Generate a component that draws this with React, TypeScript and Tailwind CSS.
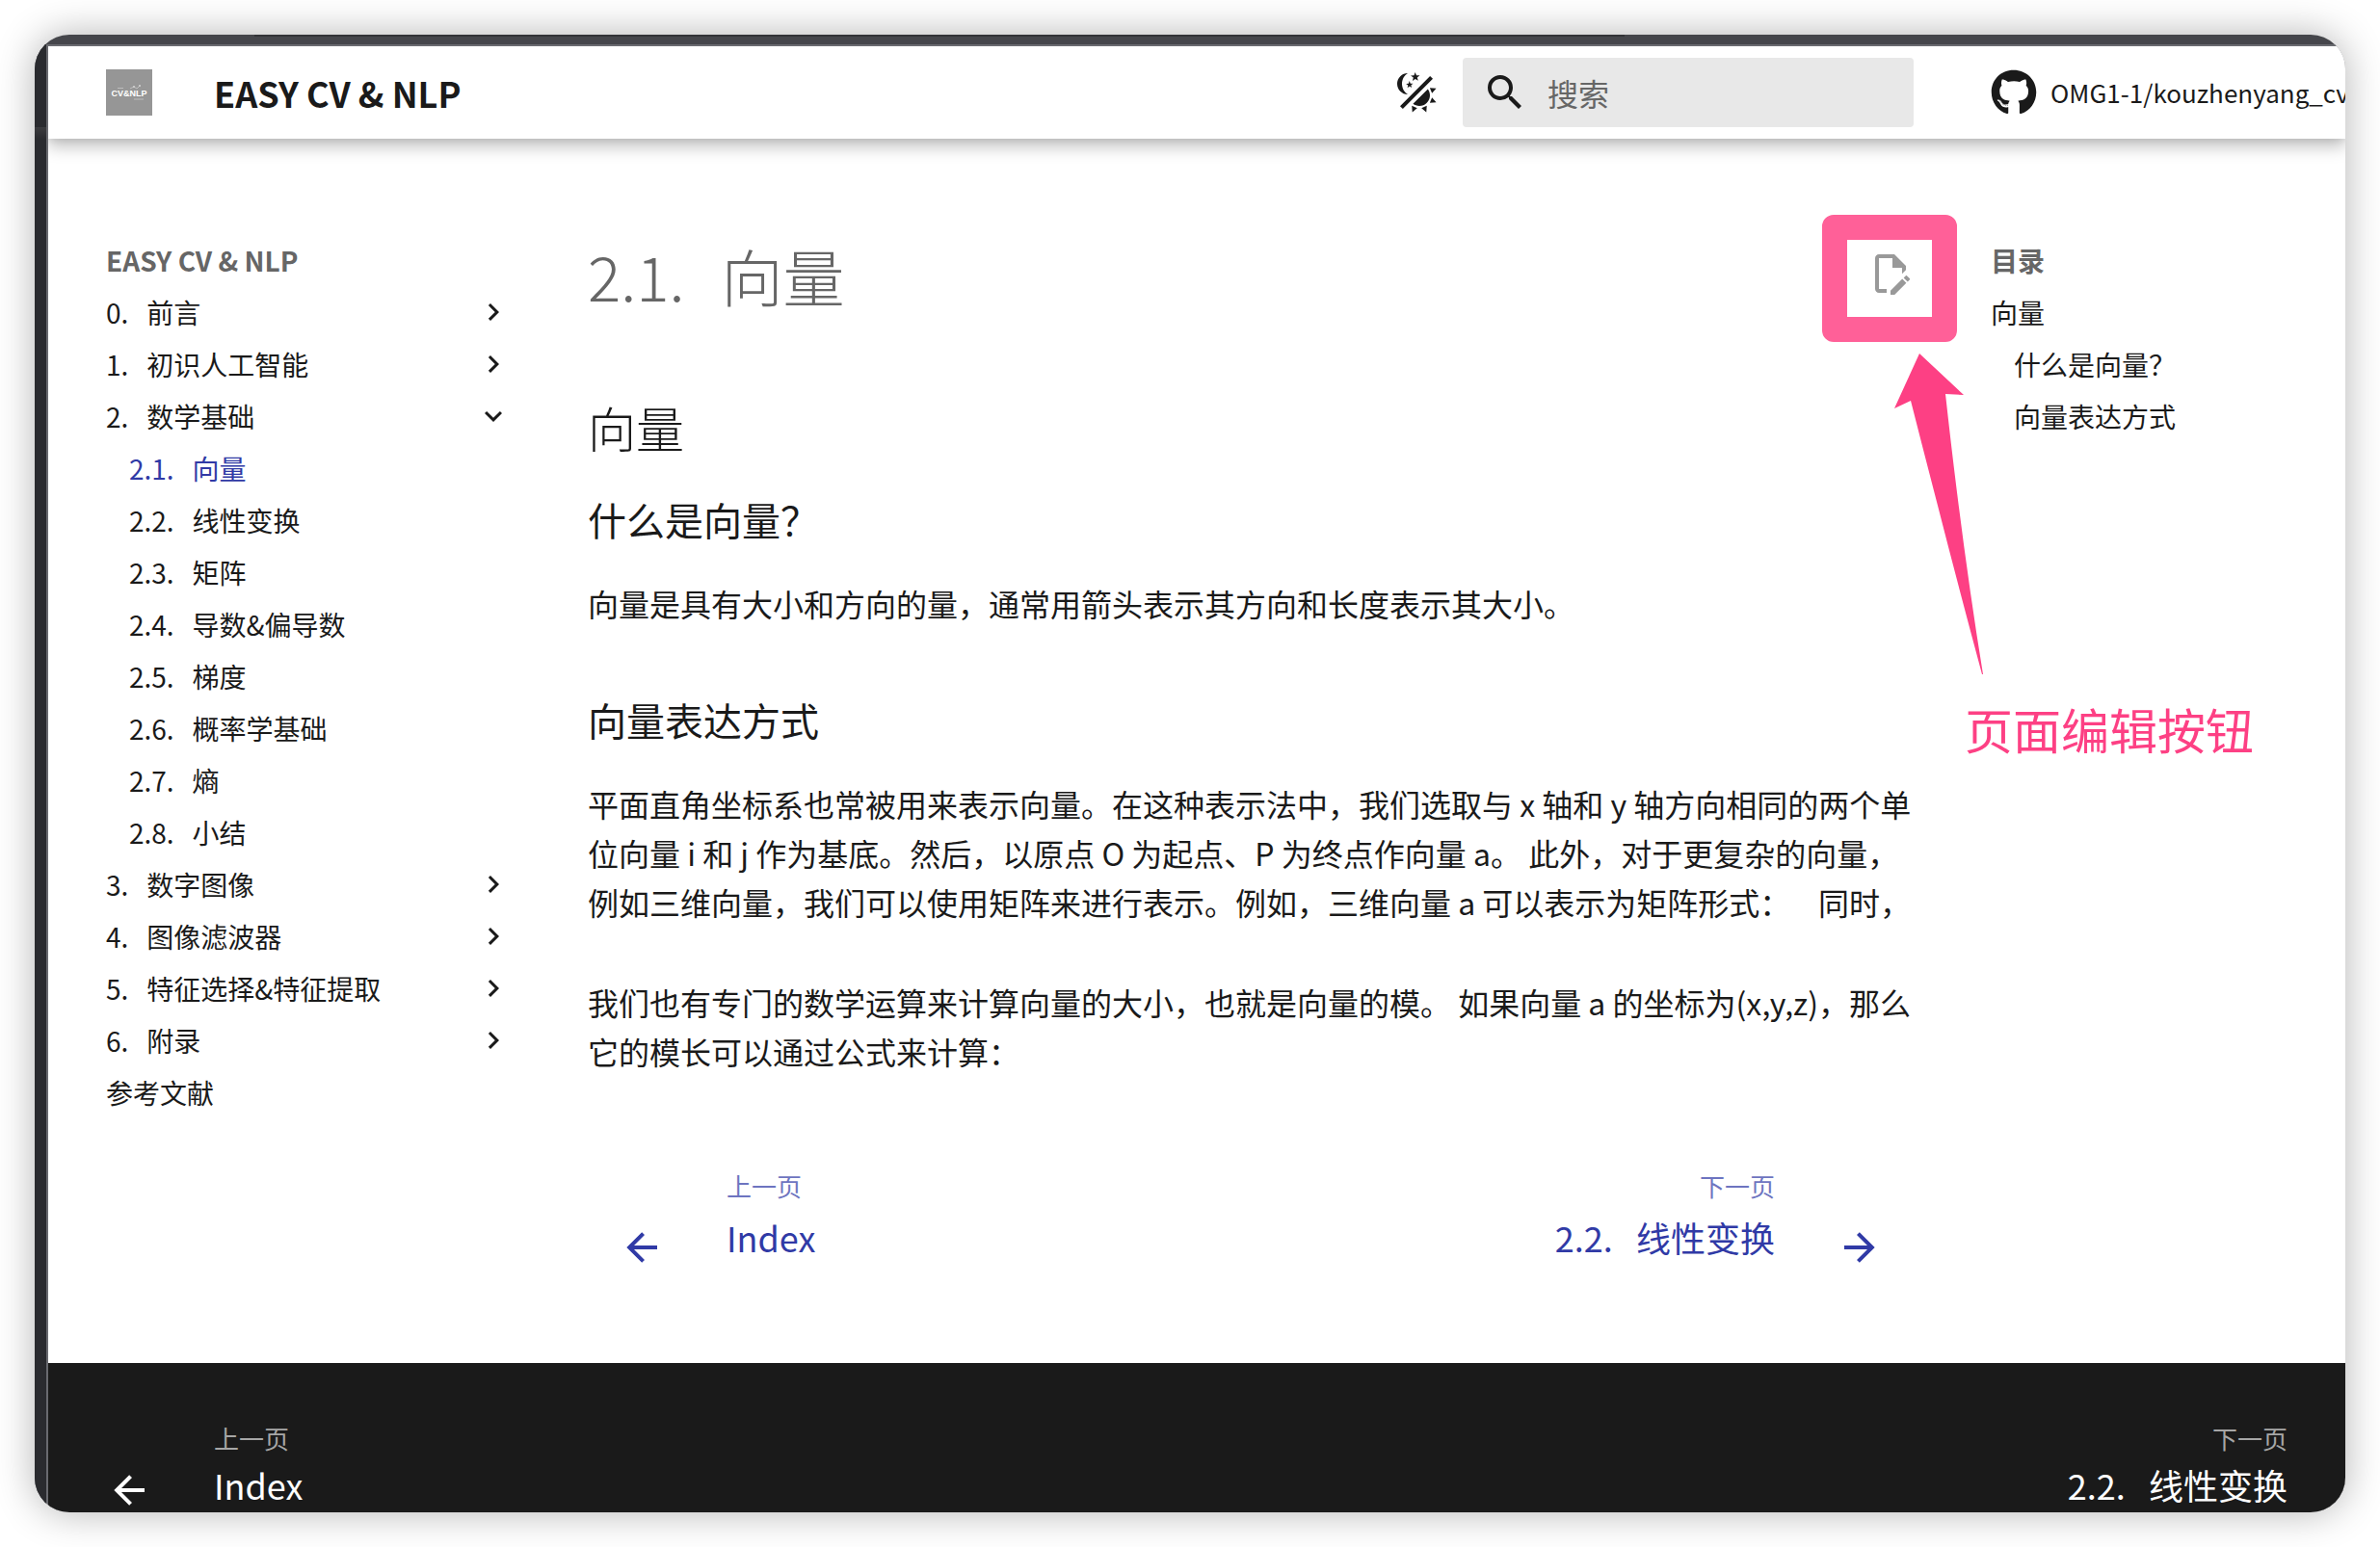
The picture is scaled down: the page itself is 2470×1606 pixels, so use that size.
import React from "react";
import { FaGithub } from "react-icons/fa";

const ICONS = {
  theme:
    "M7.5 2c-1.79 1.15-3 3.18-3 5.5s1.21 4.35 3.03 5.5C4.46 13 2 10.54 2 7.5A5.5 5.5 0 0 1 7.5 2m11.57 1.5 1.43 1.43L4.93 20.5 3.5 19.07 19.07 3.5m-6.18 2.43L11.41 5 9.97 6l.42-1.7L9 3.24l1.75-.12.58-1.65L12 3.1l1.73.03-1.35 1.13.51 1.67m-3.3 3.61-1.16-.73-1.12.78.34-1.32-1.09-.83 1.36-.09.45-1.29.51 1.27 1.36.03-1.05.87.4 1.31M19 13.5a5.5 5.5 0 0 1-5.5 5.5c-1.22 0-2.35-.4-3.26-1.07l7.69-7.69c.67.91 1.07 2.04 1.07 3.26m-4.4 6.58 2.77-1.15-.24 3.35-2.53-2.2m4.33-2.7 1.15-2.77 2.2 2.54-3.35.23m1.15-4.96-1.14-2.78 3.34.24-2.2 2.54M9.63 18.93l2.77 1.15-2.53 2.19-.24-3.34Z",
  search:
    "M9.5 3A6.5 6.5 0 0 1 16 9.5c0 1.61-.59 3.09-1.56 4.23l.27.27h.79l5 5-1.5 1.5-5-5v-.79l-.27-.27A6.516 6.516 0 0 1 9.5 16 6.5 6.5 0 0 1 3 9.5 6.5 6.5 0 0 1 9.5 3m0 2C7 5 5 7 5 9.5S7 14 9.5 14 14 12 14 9.5 12 5 9.5 5Z",
  edit: "M10 20H6V4h7v5h5v3.1l2-2V8l-6-6H6c-1.1 0-2 .9-2 2v16c0 1.1.9 2 2 2h4v-2m10.2-7c.1 0 .3.1.4.2l1.3 1.3c.2.2.2.6 0 .8l-1 1-2.1-2.1 1-1c.1-.1.2-.2.4-.2m0 3.9L14.1 23H12v-2.1l6.1-6.1 2.1 2.1Z",
  chevron: "M8.59 16.58 13.17 12 8.59 7.41 10 6l6 6-6 6-1.41-1.42Z",
  left: "M20 11v2H8l5.5 5.5-1.42 1.42L4.16 12l7.92-7.92L13.5 5.5 8 11h12Z",
  right: "M4 11v2h12l-5.5 5.5 1.42 1.42L19.84 12l-7.92-7.92L10.5 5.5 16 11H4Z",
};

function Icon({ name, className }: { name: keyof typeof ICONS; className: string }) {
  return (
    <svg viewBox="0 0 24 24" fill="currentColor" aria-hidden="true" className={`shrink-0 ${className}`}>
      <path d={ICONS[name]} />
    </svg>
  );
}

type NavItem = { label: string; open?: boolean; leaf?: boolean; children?: string[] };

const NAV: NavItem[] = [
  { label: "0.   前言" },
  { label: "1.   初识人工智能" },
  {
    label: "2.   数学基础",
    open: true,
    children: [
      "2.1.   向量",
      "2.2.   线性变换",
      "2.3.   矩阵",
      "2.4.   导数&偏导数",
      "2.5.   梯度",
      "2.6.   概率学基础",
      "2.7.   熵",
      "2.8.   小结",
    ],
  },
  { label: "3.   数字图像" },
  { label: "4.   图像滤波器" },
  { label: "5.   特征选择&特征提取" },
  { label: "6.   附录" },
  { label: "参考文献", leaf: true },
];

function Logo() {
  return (
    <svg viewBox="0 0 48 48" aria-hidden="true" className="size-12 bg-[#969696]">
      <text x="24" y="28" textAnchor="middle" fill="#fff" className="font-['Liberation_Sans',sans-serif] text-[9px] font-bold">
        CV&amp;NLP
      </text>
      <path d="M12 19.500h6M29 31h10" stroke="#bcbcbc" strokeWidth="1" />
      <path d="M25 20l4-2 3 2 3-3" fill="none" stroke="#c8c8c8" strokeWidth="0.8" />
      <circle cx="29" cy="18" r="1" fill="#d4d4d4" />
      <circle cx="35" cy="17" r="1" fill="#d4d4d4" />
    </svg>
  );
}

function Header() {
  return (
    <header className="relative z-10 flex h-24 shrink-0 items-center bg-white pl-[60px] shadow-[0_0_8px_rgba(0,0,0,0.1),0_8px_16px_rgba(0,0,0,0.25)]">
      <a href="#home" aria-label="EASY CV & NLP">
        <Logo />
      </a>
      <span className="ml-16 flex-1 text-4xl leading-[48px] font-bold">EASY CV &amp; NLP</span>
      <button type="button" aria-label="切换主题" className="mr-6">
        <Icon name="theme" className="size-12" />
      </button>
      <label className="mr-20 flex h-[72px] w-[468px] items-center gap-5 rounded bg-[#e8e8e8] px-5">
        <Icon name="search" className="size-12" />
        <input
          type="search"
          aria-label="搜索"
          placeholder="搜索"
          className="min-w-0 flex-1 bg-transparent text-[32px] leading-[48px] outline-none placeholder:text-[#666]"
        />
      </label>
      <a href="#source" className="flex w-[368px] items-center gap-[14px] overflow-hidden whitespace-nowrap">
        <FaGithub className="size-12 shrink-0" />
        <span className="text-[26px] leading-8">OMG1-1/kouzhenyang_cv</span>
      </a>
    </header>
  );
}

function Sidebar() {
  return (
    <nav aria-label="EASY CV & NLP" className="flex w-[420px] shrink-0 flex-col gap-[18px] pt-[108px] text-[28px] leading-9">
      <a href="#home" className="font-bold text-[#666]">
        EASY CV &amp; NLP
      </a>
      <ul className="flex flex-col gap-[18px]">
        {NAV.map((item) => (
          <li key={item.label} className="flex flex-col gap-[18px]">
            {item.leaf ? (
              <a href="#item">{item.label}</a>
            ) : (
              <button type="button" aria-expanded={!!item.open} className="flex items-center justify-between text-left">
                <span className="whitespace-pre">{item.label}</span>
                <Icon name="chevron" className={item.open ? "size-9 rotate-90" : "size-9"} />
              </button>
            )}
            {item.children && (
              <ul className="flex flex-col gap-[18px] pl-6">
                {item.children.map((child, i) => (
                  <li key={child}>
                    <a href="#item" className={i === 0 ? "whitespace-pre text-[#303aa6]" : "whitespace-pre"}>
                      {child}
                    </a>
                  </li>
                ))}
              </ul>
            )}
          </li>
        ))}
      </ul>
    </nav>
  );
}

function Annotation() {
  return (
    <>
      <div className="pointer-events-none absolute -top-[37px] -left-[47px] h-[132px] w-[140px] rounded-xl border-[26px] border-[#ff6098]" />
      <svg
        viewBox="0 0 92 333"
        fill="#fd4084"
        aria-hidden="true"
        className="pointer-events-none absolute top-[107px] left-7 h-[333px] w-[92px]"
      >
        <path d="M26 0 72 43 53 42Q71 205 92 333H91Q66 240 44 154Q30 100 17 49L0 57Z" />
      </svg>
      <p className="absolute top-[466px] left-[101px] text-[50px] leading-[60px] whitespace-nowrap text-[#fd4084]">
        页面编辑按钮
      </p>
    </>
  );
}

function Article() {
  return (
    <main className="min-w-0 flex-1 pt-[100px]">
      <article>
        <div className="flex items-start justify-between">
          <h1 className="flex gap-[38px] text-[64px] leading-[82px] font-light text-[#666]">
            <span>2.1.</span>
            <span>向量</span>
          </h1>
          <div className="relative mt-4">
            <button type="button" aria-label="编辑此页" className="block text-[#999]">
              <Icon name="edit" className="size-12" />
            </button>
            <Annotation />
          </div>
        </div>
        <h2 className="mt-[82px] text-[50px] leading-[70px] font-light">向量</h2>
        <h3 className="mt-8 text-[40px] leading-[58px]">什么是向量？</h3>
        <p className="mt-[33px] text-[32px] leading-[51px]">向量是具有大小和方向的量，通常用箭头表示其方向和长度表示其大小。</p>
        <h3 className="mt-[66px] text-[40px] leading-[58px]">向量表达方式</h3>
        <p className="mt-[33px] text-[32px] leading-[51px] whitespace-pre">
          平面直角坐标系也常被用来表示向量。在这种表示法中，我们选取与 x 轴和 y 轴方向相同的两个单
          <br />
          位向量 i 和 j 作为基底。然后，以原点 O 为起点、P 为终点作向量 a。 此外，对于更复杂的向量，
          <br />
          例如三维向量，我们可以使用矩阵来进行表示。例如，三维向量 a 可以表示为矩阵形式：&nbsp;&nbsp;&nbsp;&nbsp;同时，
        </p>
        <p className="mt-[53px] text-[32px] leading-[51px] whitespace-pre">
          我们也有专门的数学运算来计算向量的大小，也就是向量的模。 如果向量 a 的坐标为(x,y,z)，那么
          <br />
          它的模长可以通过公式来计算：
        </p>
      </article>
      <nav aria-label="翻页" className="mt-24 flex justify-between px-8 pb-24 text-[#303aa6]">
        <a href="#prev" className="flex items-end gap-16">
          <Icon name="left" className="size-12" />
          <span className="flex flex-col">
            <span className="text-[26px] leading-9 opacity-70">上一页</span>
            <span className="text-4xl leading-[70px]">Index</span>
          </span>
        </a>
        <a href="#next" className="flex items-end gap-16 text-right">
          <span className="flex flex-col">
            <span className="text-[26px] leading-9 opacity-70">下一页</span>
            <span className="text-4xl leading-[70px] whitespace-pre">2.2.   线性变换</span>
          </span>
          <Icon name="right" className="size-12" />
        </a>
      </nav>
    </main>
  );
}

function Toc() {
  return (
    <nav aria-label="目录" className="flex w-[368px] shrink-0 flex-col gap-[18px] pt-[108px] text-[28px] leading-9">
      <span className="font-bold text-[#666]">目录</span>
      <a href="#vector">向量</a>
      <a href="#what" className="pl-6">
        什么是向量？
      </a>
      <a href="#how" className="pl-6">
        向量表达方式
      </a>
    </nav>
  );
}

function Footer() {
  return (
    <footer className="flex flex-1 shrink-0 justify-between bg-[#1a1a1a] px-[60px] pt-[60px] text-white">
      <a href="#prev" className="flex gap-16">
        <Icon name="left" className="mt-12 size-12" />
        <span className="flex flex-col">
          <span className="text-[26px] leading-9 text-[#a6a6a6]">上一页</span>
          <span className="text-4xl leading-[60px]">Index</span>
        </span>
      </a>
      <a href="#next" className="flex flex-col text-right">
        <span className="text-[26px] leading-9 text-[#a6a6a6]">下一页</span>
        <span className="text-4xl leading-[60px] whitespace-pre">2.2.   线性变换</span>
      </a>
    </footer>
  );
}

export default function App() {
  return (
    <div className="h-screen bg-white p-9 font-['Noto_Sans_CJK_SC',sans-serif] text-[#1a1a1a]">
      <div className="flex h-full flex-col overflow-hidden rounded-[36px] bg-[#45464b] shadow-[0_0_40px_rgba(0,0,0,0.3)]">
        <div className="flex h-[10px] shrink-0 items-start pr-[748px] pl-[228px]">
          <div className="h-0.5 flex-1 bg-[#333438]" />
        </div>
        <div className="flex min-h-0 flex-1">
          <div className="flex w-3 shrink-0 flex-col bg-[#2a2b2f] pt-[86px]">
            <div className="h-3 bg-linear-to-b from-[#3c3c3f] to-[#2a2b2f]" />
          </div>
          <div className="flex min-w-0 flex-1 flex-col overflow-hidden border-t-2 border-l-2 border-[#696a6f] bg-white">
            <Header />
            <div className="flex shrink-0 gap-20 pl-[60px]">
              <Sidebar />
              <Article />
              <Toc />
            </div>
            <Footer />
          </div>
        </div>
      </div>
    </div>
  );
}
